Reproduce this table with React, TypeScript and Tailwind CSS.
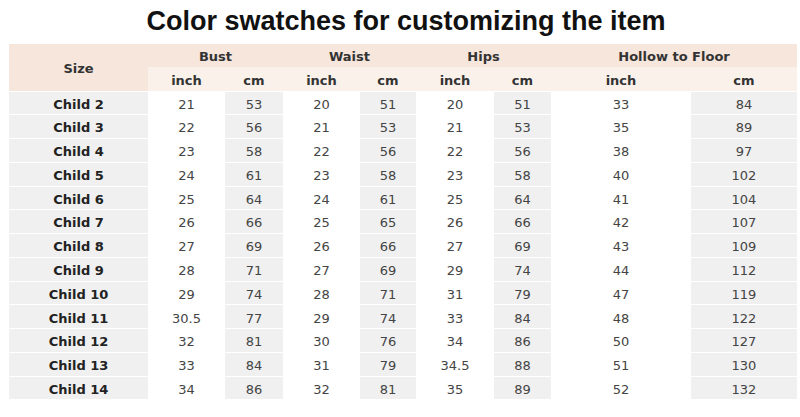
const rows: [string, string, string, string, string, string, string, string, string][] = [
  ["Child 2", "21", "53", "20", "51", "20", "51", "33", "84"],
  ["Child 3", "22", "56", "21", "53", "21", "53", "35", "89"],
  ["Child 4", "23", "58", "22", "56", "22", "56", "38", "97"],
  ["Child 5", "24", "61", "23", "58", "23", "58", "40", "102"],
  ["Child 6", "25", "64", "24", "61", "25", "64", "41", "104"],
  ["Child 7", "26", "66", "25", "65", "26", "66", "42", "107"],
  ["Child 8", "27", "69", "26", "66", "27", "69", "43", "109"],
  ["Child 9", "28", "71", "27", "69", "29", "74", "44", "112"],
  ["Child 10", "29", "74", "28", "71", "31", "79", "47", "119"],
  ["Child 11", "30.5", "77", "29", "74", "33", "84", "48", "122"],
  ["Child 12", "32", "81", "30", "76", "34", "86", "50", "127"],
  ["Child 13", "33", "84", "31", "79", "34.5", "88", "51", "130"],
  ["Child 14", "34", "86", "32", "81", "35", "89", "52", "132"],
];

const widths = [139, 77, 58, 77, 56, 78, 57, 140, 106];
const groups = ["Bust", "Waist", "Hips", "Hollow to Floor"];

export default function App() {
  return (
    <div className="h-[417px] w-[800px] overflow-hidden bg-white font-['DejaVu_Sans',Verdana,sans-serif]">
      <h1 className="pl-[12px] pt-[3px] text-center font-['Liberation_Sans',Arial,sans-serif] text-[27px] font-bold leading-[36px] text-[#111]">
        Color swatches for customizing the item
      </h1>
      <table className="ml-[9px] mt-[5px] table-fixed border-collapse text-[13px]">
        <colgroup>
          {widths.map((w, i) => (
            <col key={i} style={{ width: w }} />
          ))}
        </colgroup>
        <thead className="font-bold text-[#333]">
          <tr className="h-[23px] bg-[#f6e6dc]">
            <th rowSpan={2} className="border-b border-white pt-[3px] align-middle">Size</th>
            {groups.map((g) => (
              <th key={g} colSpan={2} className="pt-[2px] align-middle">{g}</th>
            ))}
          </tr>
          <tr className="h-[24px] bg-[#fbf1eb]">
            {groups.flatMap((g) => [
              <th key={g + "i"} className="border-b border-white pt-[4px] align-middle">inch</th>,
              <th key={g + "c"} className="border-b border-white pt-[4px] align-middle">cm</th>,
            ])}
          </tr>
        </thead>
        <tbody className="text-[#444]">
          {rows.map((r) => (
            <tr key={r[0]} className="h-[23.77px]">
              {r.map((v, i) => (
                <td
                  key={i}
                  className={
                    "border-b border-white p-0 pt-[3px] text-center align-middle " +
                    (i === 0 ? "bg-[#f0f0f0] font-bold text-[#222]" : i % 2 === 0 ? "bg-[#f0f0f0]" : "bg-white")
                  }
                >
                  {v}
                </td>
              ))}
            </tr>
          ))}
        </tbody>
      </table>
    </div>
  );
}
